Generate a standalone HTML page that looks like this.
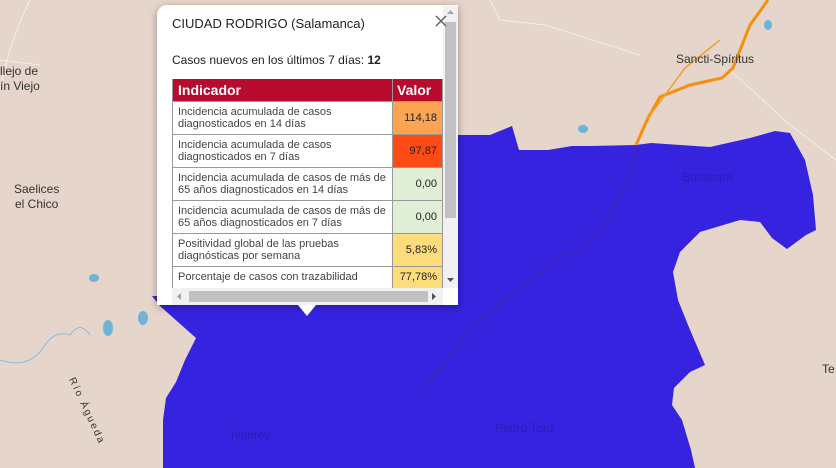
<!DOCTYPE html>
<html><head><meta charset="utf-8"><style>
*{margin:0;padding:0;box-sizing:border-box}
body{width:836px;height:468px;overflow:hidden;background:#e6d5cb;font-family:"Liberation Sans",sans-serif;position:relative}
svg.map{position:absolute;left:0;top:0}
.lbl{position:absolute;font-size:12px;color:#333;line-height:15px}
.pop{position:absolute;left:157px;top:5px;width:301px;height:300px;background:#fff;border-radius:10px 0 0 0;box-shadow:0 2px 8px rgba(0,0,0,.35)}
.tip{position:absolute;left:298px;top:305px;width:0;height:0;border-left:9px solid transparent;border-right:9px solid transparent;border-top:11px solid #fff}
.title{position:absolute;left:15px;top:11px;font-size:13px;color:#222}
.casos{position:absolute;left:15px;top:48px;font-size:12px;color:#222}
table{position:absolute;left:15px;top:74px;width:271px;border-collapse:collapse;font-size:11px;color:#444}
th{background:#b80b2e;color:#fff;text-align:left;font-size:14px;height:22px;padding:0 5px;border:1px solid #999;border-top:none}
td{border:1px solid #999;padding:1px 5px;line-height:12px;height:33px}
td.v{text-align:right;width:50px;color:#222}
.vs{position:absolute;left:286px;top:1px;width:15px;height:282px;background:#f1f1f1}
.vs .th{position:absolute;left:2px;top:16px;width:11px;height:196px;background:#c1c1c1}
.hs{position:absolute;left:15px;top:283px;width:271px;height:17px;background:#f1f1f1}
.hs .th{position:absolute;left:17px;top:3px;width:239px;height:11px;background:#c1c1c1}
svg.ic{position:absolute}
</style></head><body>
<svg class="map" width="836" height="468">
<path d="M0 60 L40 65 M30 0 Q10 40 0 90" stroke="#fff" stroke-width="1" fill="none" opacity=".6"/>
<path d="M490 0 L500 20 L545 25 L640 55" stroke="#fff" stroke-width="1" fill="none" opacity=".6"/>
<path d="M730 70 L790 125 L836 160" stroke="#fff" stroke-width="1" fill="none" opacity=".6"/>
<path d="M0 360 Q30 370 45 345 Q55 330 70 335 Q80 320 90 335" stroke="#8ab8d8" stroke-width="1" fill="none"/>
<ellipse cx="94" cy="278" rx="5" ry="4" fill="#6fb3d8"/>
<ellipse cx="108" cy="328" rx="5" ry="8" fill="#6fb3d8"/>
<ellipse cx="143" cy="318" rx="5" ry="7" fill="#6fb3d8"/>
<ellipse cx="583" cy="129" rx="5" ry="4" fill="#6fb3d8"/>
<ellipse cx="768" cy="25" rx="4" ry="5" fill="#6fb3d8"/>
<path d="M152 296 L160 306 L196 338 L185 360 L176 382 L166 398 L163 420 L163 468 L695 468 L691 450 L682 420 L672 405 L674 388 L690 372 L705 365 L688 325 L678 300 L673 272 L680 252 L700 232 L740 220 L760 222 L772 238 L787 249 L806 235 L816 230 L813 195 L805 160 L790 133 L775 131 L750 138 L710 147 L651 143 L636 145 L590 146 L572 146 L548 150 L519 150 L512 126 L490 135 L458 135 L458 296 Z" fill="#3523e0"/>
<path d="M636 145 L648 118 L660 97 L690 85 L722 78 L733 68 L750 25 L768 0" stroke="#f4900c" stroke-width="3" fill="none"/>
<path d="M648 118 L685 68 L720 40" stroke="#f0a030" stroke-width="1.5" fill="none"/>
<path d="M636 146 L630 175 L605 225 L578 252 L560 256 L525 285 L498 305 L470 330 L440 370 L425 385" stroke="#4a2aa8" stroke-width="1.5" fill="none" opacity=".8"/>
</svg>
<div class="lbl" style="left:0;top:64px">llejo de<br>ín Viejo</div>
<div class="lbl" style="left:14px;top:182px;text-align:center">Saelices<br>el Chico</div>
<div class="lbl" style="left:676px;top:52px">Sancti-Spíritus</div>
<div class="lbl" style="left:682px;top:170px;color:#2a1cb8">Bocacara</div>
<div class="lbl" style="left:495px;top:421px;color:#2a1cb8">Pedro Toro</div>
<div class="lbl" style="left:231px;top:428px;color:#2a1cb8">Ivanrey</div>
<div class="lbl" style="left:822px;top:362px">Te</div>
<div class="lbl" style="left:78px;top:375px;font-size:10px;transform:rotate(65deg);transform-origin:left top;letter-spacing:2px">Río Águeda</div>
<div class="pop">
<div class="title">CIUDAD RODRIGO (Salamanca)</div>
<div class="casos">Casos nuevos en los últimos 7 días: <b>12</b></div>
<table>
<tr><th>Indicador</th><th style="padding-left:4px">Valor</th></tr>
<tr><td>Incidencia acumulada de casos diagnosticados en 14 días</td><td class="v" style="background:#fca452">114,18</td></tr>
<tr><td>Incidencia acumulada de casos diagnosticados en 7 días</td><td class="v" style="background:#fe4a15">97,87</td></tr>
<tr><td>Incidencia acumulada de casos de más de 65 años diagnosticados en 14 días</td><td class="v" style="background:#e0eed5">0,00</td></tr>
<tr><td>Incidencia acumulada de casos de más de 65 años diagnosticados en 7 días</td><td class="v" style="background:#e0eed5">0,00</td></tr>
<tr><td>Positividad global de las pruebas diagnósticas por semana</td><td class="v" style="background:#fedc7b">5,83%</td></tr>
<tr><td style="height:22px">Porcentaje de casos con trazabilidad</td><td class="v" style="background:#fedc7b;height:22px">77,78%</td></tr>
</table>
<div class="vs"><div class="th"></div>
<svg class="ic" style="left:4px;top:4px" width="7" height="5"><path d="M0 4 L3.5 0 L7 4Z" fill="#a3a3a3"/></svg>
<svg class="ic" style="left:4px;top:272px" width="7" height="5"><path d="M0 0 L3.5 4 L7 0Z" fill="#505050"/></svg>
</div>
<div class="hs"><div class="th"></div>
<svg class="ic" style="left:5px;top:5px" width="5" height="7"><path d="M4 0 L0 3.5 L4 7Z" fill="#a3a3a3"/></svg>
<svg class="ic" style="left:260px;top:5px" width="5" height="7"><path d="M0 0 L4 3.5 L0 7Z" fill="#505050"/></svg>
</div>
<svg class="ic" style="left:278px;top:10px" width="12" height="12"><path d="M1 1 L11 11 M11 1 L1 11" stroke="#666" stroke-width="1.5"/></svg>
</div>
<div class="tip"></div>
</body></html>
